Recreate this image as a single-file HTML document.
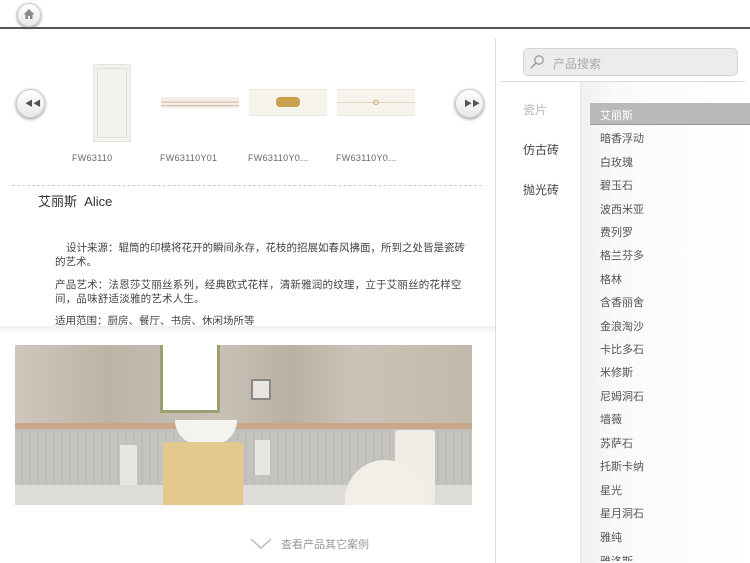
<!DOCTYPE html><html><head><meta charset="utf-8"><style>
*{margin:0;padding:0;box-sizing:border-box}
body{width:750px;height:563px;overflow:hidden;background:#fff;font-family:"Liberation Sans","Noto Sans CJK SC",sans-serif;position:relative}
.a{position:absolute}
.btn{border-radius:50%;background:linear-gradient(#fff,#e8e8e8);box-shadow:0 1px 3px rgba(0,0,0,.45);border:1px solid #ccc}
.lbl{font-size:9px;color:#666;top:153px;letter-spacing:.3px}
.p{font-size:10.5px;color:#444;line-height:14px;left:55px;width:440px;white-space:nowrap}
.li{position:absolute;left:600px;font-size:11px;color:#555}
</style></head><body>
<div class="a btn" style="left:17px;top:3px;width:24px;height:24px"></div>
<svg class="a" style="left:22px;top:7px" width="14" height="14" viewBox="0 0 14 14"><path d="M7 2L1.5 7.5H3.5V12H6V9H8V12H10.5V7.5H12.5Z" fill="#888"/></svg>
<div class="a" style="left:0;top:27px;width:750px;height:2px;background:#555"></div>
<div class="a" style="left:495px;top:38px;width:1px;height:525px;background:#ddd"></div>
<div class="a btn" style="left:16px;top:89px;width:29px;height:29px"></div>
<div class="a" style="left:25px;top:98px;font-size:8px;color:#555">◀◀</div>
<div class="a btn" style="left:455px;top:89px;width:29px;height:29px"></div>
<div class="a" style="left:464px;top:98px;font-size:8px;color:#555">▶▶</div>
<div class="a" style="left:93px;top:64px;width:38px;height:78px;background:#f4f2ee;border:1px solid #e6e2dc;box-shadow:inset 0 0 0 3px #f4f2ee,inset 0 0 0 4px #e2ddd6"></div>
<div class="a" style="left:161px;top:97px;width:78px;height:11px;background:linear-gradient(#f3efe8 0,#f3efe8 40%,#c9a47a 45%,#f3efe8 55%,#f3efe8 75%,#b08860 80%,#f3efe8 85%)"></div>
<div class="a" style="left:249px;top:89px;width:78px;height:27px;background:#f6f3ec;border-top:1px solid #ece6da;border-bottom:1px solid #ece6da"></div>
<div class="a" style="left:276px;top:97px;width:24px;height:10px;background:#c9a050;border-radius:4px"></div>
<div class="a" style="left:337px;top:89px;width:78px;height:27px;background:#f6f3ec;border-top:1px solid #ece6da;border-bottom:1px solid #ece6da"></div>
<div class="a" style="left:337px;top:102px;width:78px;height:1px;background:#e4d8c4"></div>
<div class="a" style="left:373px;top:100px;width:6px;height:5px;border:1px solid #c9a870;border-radius:50%"></div>
<div class="a lbl" style="left:72px">FW63110</div>
<div class="a lbl" style="left:160px">FW63110Y01</div>
<div class="a lbl" style="left:248px">FW63110Y0...</div>
<div class="a lbl" style="left:336px">FW63110Y0...</div>
<div class="a" style="left:12px;top:185px;width:470px;border-top:1px dashed #ccc"></div>
<div class="a" style="left:38px;top:191px;font-size:13px;color:#333">艾丽斯&nbsp; Alice</div>
<div class="a p" style="top:241px"><span style="padding-left:11px"></span>设计来源：辊筒的印模将花开的瞬间永存，花枝的招展如春风拂面，所到之处皆是瓷砖<br>的艺术。</div>
<div class="a p" style="top:278px;letter-spacing:.2px">产品艺术：法恩莎艾丽丝系列，经典欧式花样，清新雅润的纹理，立于艾丽丝的花样空<br>间，品味舒适淡雅的艺术人生。</div>
<div class="a" style="left:55px;top:314px;width:420px;height:11px;overflow:hidden"><div class="p" style="position:relative;left:0">适用范围：厨房、餐厅、书房、休闲场所等</div></div>
<div class="a" style="left:0;top:326px;width:495px;height:8px;background:linear-gradient(#eee,#fff)"></div>
<div class="a" style="left:15px;top:345px;width:457px;height:160px;overflow:hidden;background:#c8c0b4">
 <div class="a" style="left:0;top:0;width:457px;height:80px;background:linear-gradient(90deg,#cfc7bb,#bdb4a8 20%,#c9c1b5 45%,#bab1a4 60%,#cbc3b7 75%,#c2b9ac)"></div>
 <div class="a" style="left:0;top:78px;width:457px;height:6px;background:#c9a88a"></div>
 <div class="a" style="left:0;top:84px;width:457px;height:76px;background:repeating-linear-gradient(90deg,#c4c3bd 0,#c4c3bd 6px,#b8b7b1 7px,#c4c3bd 8px)"></div>
 <div class="a" style="left:0;top:140px;width:457px;height:20px;background:#dedcd6"></div>
 <div class="a" style="left:145px;top:0;width:60px;height:68px;background:#fff;border:3px solid #9ba070;border-top:0"></div>
 <div class="a" style="left:160px;top:75px;width:62px;height:25px;background:#f4f3f0;border-radius:0 0 30px 30px"></div>
 <div class="a" style="left:148px;top:97px;width:80px;height:63px;background:#e3c98e"></div>
 <div class="a" style="left:236px;top:34px;width:20px;height:21px;background:#e8e4de;border:2px solid #8a8884"></div>
 <div class="a" style="left:105px;top:100px;width:17px;height:40px;background:#e8e6e2"></div>
 <div class="a" style="left:240px;top:95px;width:15px;height:35px;background:#e8e6e2"></div>
 <div class="a" style="left:380px;top:85px;width:40px;height:75px;background:#efede6;border-radius:4px"></div>
 <div class="a" style="left:330px;top:115px;width:80px;height:45px;background:#f1efe8;border-radius:40px 40px 0 0"></div>
</div>
<svg class="a" style="left:250px;top:538px" width="22" height="12"><path d="M1 1L11 10L21 1" fill="none" stroke="#bbb" stroke-width="1.5"/></svg>
<div class="a" style="left:281px;top:536px;font-size:11px;color:#999">查看产品其它案例</div>
<div class="a" style="left:523px;top:48px;width:215px;height:28px;background:#ececec;border:1px solid #d4d4d4;border-radius:5px"></div>
<svg class="a" style="left:529px;top:54px" width="16" height="16"><circle cx="10" cy="6" r="4.2" fill="none" stroke="#999" stroke-width="1.3"/><path d="M7 9L2 14" stroke="#999" stroke-width="1.5"/></svg>
<div class="a" style="left:553px;top:55px;font-size:12px;color:#aaa">产品搜索</div>
<div class="a" style="left:500px;top:81px;width:245px;height:1px;background:#ddd"></div>
<div class="a" style="left:580px;top:82px;width:170px;height:481px;background:linear-gradient(90deg,#f0f0f0,#fafafa 20%,#fff);border-left:1px solid #e6e6e6"></div>
<div class="a" style="left:523px;top:101px;font-size:12px;color:#bbb">瓷片</div>
<div class="a" style="left:523px;top:141px;font-size:12px;color:#444">仿古砖</div>
<div class="a" style="left:523px;top:181px;font-size:12px;color:#444">抛光砖</div>
<div class="a" style="left:590px;top:103px;width:160px;height:22px;background:#b9b9b9;border-bottom:1px solid #999"></div>
<div class="li" style="top:107px;color:#fff">艾丽斯</div>
<div class="li" style="top:130px">暗香浮动</div>
<div class="li" style="top:154px">白玫瑰</div>
<div class="li" style="top:177px">碧玉石</div>
<div class="li" style="top:201px">波西米亚</div>
<div class="li" style="top:224px">费列罗</div>
<div class="li" style="top:247px">格兰芬多</div>
<div class="li" style="top:271px">格林</div>
<div class="li" style="top:294px">含香丽舍</div>
<div class="li" style="top:318px">金浪淘沙</div>
<div class="li" style="top:341px">卡比多石</div>
<div class="li" style="top:364px">米修斯</div>
<div class="li" style="top:388px">尼姆洞石</div>
<div class="li" style="top:411px">墙薇</div>
<div class="li" style="top:435px">苏萨石</div>
<div class="li" style="top:458px">托斯卡纳</div>
<div class="li" style="top:482px">星光</div>
<div class="li" style="top:505px">星月洞石</div>
<div class="li" style="top:529px">雅纯</div>
<div class="a" style="left:600px;top:553px;height:8px;overflow:hidden;font-size:11px;color:#555;width:80px">雅洛斯</div>
</body></html>
